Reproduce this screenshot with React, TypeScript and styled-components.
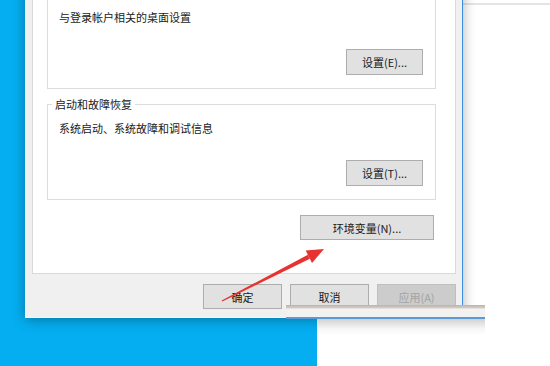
import React from "react";
import styled, { createGlobalStyle } from "styled-components";

const GlobalStyle = createGlobalStyle`
  html, body { margin: 0; padding: 0; background: #ffffff; }
  body { font-family: "Noto Sans CJK SC", "Noto Sans", sans-serif; }
  * { box-sizing: border-box; }
`;

const Desktop = styled.div`
  position: relative;
  width: 550px;
  height: 366px;
  overflow: hidden;
  background: #05aef1;
`;

const BackWindow = styled.div`
  position: absolute;
  left: 440px;
  top: 0;
  right: 0;
  bottom: 0;
  background: linear-gradient(#ffffff 0 3px, #e4e4e4 3px 5px, #ffffff 5px);
`;

const Dialog = styled.div`
  position: absolute;
  left: 25px;
  top: -30px;
  width: 438px;
  display: flex;
  flex-direction: column;
  padding: 2px 6px 8px 6px;
  background: #f0f0f0;
  border-left: 1px solid #f9f9f9;
  border-right: 1px solid #3a8fe0;
  border-bottom: 1px solid #f6f6f6;
  box-shadow: 0 2px 12px rgba(0, 0, 0, 0.32);
`;

const TabPage = styled.div`
  display: flex;
  flex-direction: column;
  align-items: stretch;
  padding: 17px 19px 33px 14px;
  background: #ffffff;
  border: 1px solid #d9d9d9;
`;

const GroupBox = styled.div`
  display: flex;
  flex-direction: column;
  padding: 18px 12px 13px 11px;
  border: 1px solid #dcdcdc;
`;

const GroupSet = styled.fieldset`
  display: flex;
  flex-direction: column;
  margin: 7px 0 0 0;
  padding: 8px 12px 13px 11px;
  border: 1px solid #dcdcdc;
  min-width: 0;
`;

const Legend = styled.legend`
  margin-left: -7px;
  padding: 0 3px;
  font-size: 11px;
  line-height: 16px;
  color: #1a1a1a;
`;

const Description = styled.div`
  font-size: 11px;
  line-height: 16px;
  color: #1a1a1a;
  white-space: nowrap;
`;

const Button = styled.button<{ $w: number; $h?: number; $top?: number; $disabled?: boolean }>`
  align-self: flex-end;
  width: ${(p) => p.$w}px;
  height: ${(p) => p.$h ?? 26}px;
  margin: ${(p) => p.$top ?? 0}px 0 0 0;
  padding: 0;
  font-family: "Noto Sans CJK SC", "Noto Sans", sans-serif;
  font-size: 11px;
  line-height: 16px;
  color: ${(p) => (p.$disabled ? "#a3a3a3" : "#1a1a1a")};
  background: ${(p) => (p.$disabled ? "#cccccc" : "#e1e1e1")};
  border: 1px solid ${(p) => (p.$disabled ? "#bfbfbf" : "#adadad")};
  border-radius: 0;
  white-space: nowrap;
`;

const EnvButton = styled(Button)`
  margin-right: 2px;
`;

const ButtonRow = styled.div`
  display: flex;
  justify-content: flex-end;
  gap: 8px;
  margin-top: 10px;
`;

const RowButton = styled(Button)`
  align-self: auto;
`;

const OverlayStrip = styled.div`
  position: absolute;
  left: 286px;
  top: 305px;
  width: 199px;
  height: 14px;
  background: linear-gradient(
    #bcb2a8 0px,
    #d5cec7 3px,
    #f2f2f2 4px,
    #f2f2f2 12px,
    #5b9ad6 12px,
    #5b9ad6 14px
  );
`;

const WhiteSheet = styled.div`
  position: absolute;
  left: 317px;
  top: 319px;
  width: 168px;
  height: 47px;
  background: linear-gradient(#d2d2d2, #f7f7f7 10px, #ffffff 16px);
`;

const ArrowLayer = styled.svg`
  position: absolute;
  left: 0;
  top: 0;
  width: 550px;
  height: 366px;
  pointer-events: none;
`;

export default function App() {
  // arrow geometry
  const sx = 222, sy = 301, tx = 324, ty = 249;
  const dx = tx - sx, dy = ty - sy;
  const len = Math.hypot(dx, dy);
  const ux = dx / len, uy = dy / len;
  const nx = -uy, ny = ux;
  const headLen = 17, headHalf = 7;
  const bx = tx - ux * headLen, by = ty - uy * headLen;
  const w0 = 0.6, w1 = 2.2;
  const shaft = [
    [sx + nx * w0, sy + ny * w0],
    [bx + nx * w1, by + ny * w1],
    [bx - nx * w1, by - ny * w1],
    [sx - nx * w0, sy - ny * w0],
  ];
  const head = [
    [tx, ty],
    [bx + nx * headHalf, by + ny * headHalf],
    [bx - nx * headHalf, by - ny * headHalf],
  ];
  const pts = (a: number[][]) => a.map((p) => p.map((v) => v.toFixed(1)).join(",")).join(" ");

  return (
    <>
      <GlobalStyle />
      <Desktop>
        <BackWindow />
        <Dialog>
          <TabPage>
            <GroupBox>
              <Description>与登录帐户相关的桌面设置</Description>
              <Button $w={77} $top={24}>设置(E)...</Button>
            </GroupBox>
            <GroupSet>
              <Legend>启动和故障恢复</Legend>
              <Description>系统启动、系统故障和调试信息</Description>
              <Button $w={77} $top={24}>设置(T)...</Button>
            </GroupSet>
            <EnvButton $w={134} $h={25} $top={15}>环境变量(N)...</EnvButton>
          </TabPage>
          <ButtonRow>
            <RowButton $w={79} $h={25}>确定</RowButton>
            <RowButton $w={79} $h={25}>取消</RowButton>
            <RowButton $w={79} $h={25} $disabled>应用(A)</RowButton>
          </ButtonRow>
        </Dialog>
        <OverlayStrip />
        <WhiteSheet />
        <ArrowLayer viewBox="0 0 550 366">
          <polygon points={pts(shaft)} fill="#e8322f" />
          <polygon points={pts(head)} fill="#e8322f" />
        </ArrowLayer>
      </Desktop>
    </>
  );
}
